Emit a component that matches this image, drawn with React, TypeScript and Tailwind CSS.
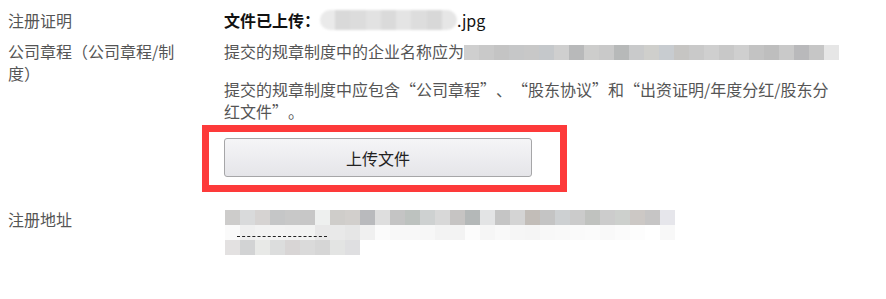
const row2Blocks = [
  '#cfcfcf', '#c9c9c9', '#c4c4c4', '#c6c7c8', '#c8c8c8', '#c5c8cb', '#cfcfcf', '#b8b9ba',
  '#cdcdcc', '#c9c9c9', '#b7b9b9', '#c9cacb', '#cfcfcc', '#c8ccd0', '#c6c5c3', '#c9c9c9',
  '#cfcfcf', '#c8c8c8', '#cfcfcf', '#c3c3c3', '#bebebe', '#c9c9c9', '#b9b9bb', '#c6c6c6', '#e6e6e6',
];

const addrTop = [
  '#cdcccb', '#d9dadb', '#d6d3d2', '#c5c6c7', '#c8c8c8', '#c7c7c7', '#eef0ef', '#cfcdca',
  '#d2cfcc', '#b9babd', '#dedede', '#c4c4c4', '#bdc2bf', '#ced1d1', '#d8d8d8', '#c6c4c3',
  '#b4b8b8', '#e3e4e5', '#c5c5c5', '#d4d4d4', '#c2bdb8', '#c4c4c4', '#cdd0d2', '#cbcbcb',
  '#c0c2bf', '#cccccc', '#cdd0cd', '#ccc8c5', '#c6c5c5', '#e6e6eb',
];

const addrMid = [
  '#fafafa', '#efefef', '#f2f2f2', '#f3f3f3', '#f2f2f2', '#f2f3f2', '#e8e8e8', '#e9e9e9',
  '#e6e6e6', '#f0f0f0', '#fbfbfb', '#f8f8f8', '#f8f8f8', '#f7f7f7', '#f3f3f3', '#f3f3f3',
  '#fcfcfc', '#f6f6f6', '#f9f9f9', '#f6f6f6', '#f5f5f5', '#f8f8f8', '#f9f9f9', '#fafafa',
  '#fbfbfb', '#f9f9f9', '#fbfbfb', '#fdfdfd', '#ffffff', '#f8f8f8',
];

const addrBottom = ['#e3e1e1', '#d2d3d4', '#e8e9e7', '#dcdddd', '#d8d5d5', '#dadada', '#d6d6d6', '#e3e4e3', '#dfdfe1'];

const BlockRow = ({ colors }: { colors: string[] }) => (
  <div className="flex h-[15px]">
    {colors.map((c, i) => (
      <div key={i} className="w-[15px] h-full" style={{ backgroundColor: c }} />
    ))}
  </div>
);

// full-width curly quotes, like the CJK system font renders them
const Open = () => <span className="inline-block w-[16px] text-right">“</span>;
const Close = () => <span className="inline-block w-[16px] text-left">”</span>;

export default function App() {
  return (
    <div
      className="w-[886px] h-[299px] bg-white text-[16px] leading-[22px] text-[#555]"
      style={{ fontFamily: '"Noto Sans CJK SC", "Noto Sans", sans-serif' }}
    >
      {/* 注册证明 */}
      <div className="flex pt-[9px]">
        <div className="w-[224px] pl-[8px] shrink-0">注册证明</div>
        <div className="flex items-center">
          <span className="font-bold text-[#111]">文件已上传：</span>
          <div className="flex h-[20px] w-[137px] rounded-[10px] overflow-hidden blur-[1px]">
            {['#eaeaea', '#d9d9d9', '#dcdcdc', '#e2e2e2', '#dadada', '#e4e4e4', '#dddddd', '#d8d8d8', '#e6e6e6'].map((c, i) => (
              <div key={i} className="flex-1" style={{ backgroundColor: c }} />
            ))}
          </div>
          <span className="text-[#111]">.jpg</span>
        </div>
      </div>

      {/* 公司章程 */}
      <div className="flex mt-[9px]">
        <div className="w-[224px] pl-[8px] pr-[40px] shrink-0">公司章程（公司章程/制度）</div>
        <div className="w-[630px]">
          <div className="flex items-center">
            <span>提交的规章制度中的企业名称应为</span>
            <div className="mt-[3px] blur-[0.5px]">
              <BlockRow colors={row2Blocks} />
            </div>
          </div>
          <p className="mt-[16px] w-[612px]">
            提交的规章制度中应包含<Open />公司章程<Close />、<Open />股东协议<Close />和<Open />出资证明/年度分红/股东分红文件<Close />。
          </p>
          <div className="-ml-[22px] mt-[3px] w-[365px] border-[7px] border-[#fd3a3a] pl-[15px] pt-[6px] pb-[8px] pr-[28px]">
            <button className="w-[308px] h-[39px] rounded-[3px] border border-[#a6a6a8] bg-gradient-to-b from-[#f5f5f7] to-[#e5e5e9] text-[16px] text-[#222]">
              上传文件
            </button>
          </div>
        </div>
      </div>

      {/* 注册地址 */}
      <div className="flex mt-[16px]">
        <div className="w-[224px] pl-[8px] shrink-0">注册地址</div>
        <div className="mt-[2px] ml-[1px] relative">
          <BlockRow colors={addrTop} />
          <BlockRow colors={addrMid} />
          <BlockRow colors={addrBottom} />
          <div className="absolute left-[12px] top-[26px] w-[90px] border-t border-dashed border-[#222]" />
        </div>
      </div>
    </div>
  );
}
